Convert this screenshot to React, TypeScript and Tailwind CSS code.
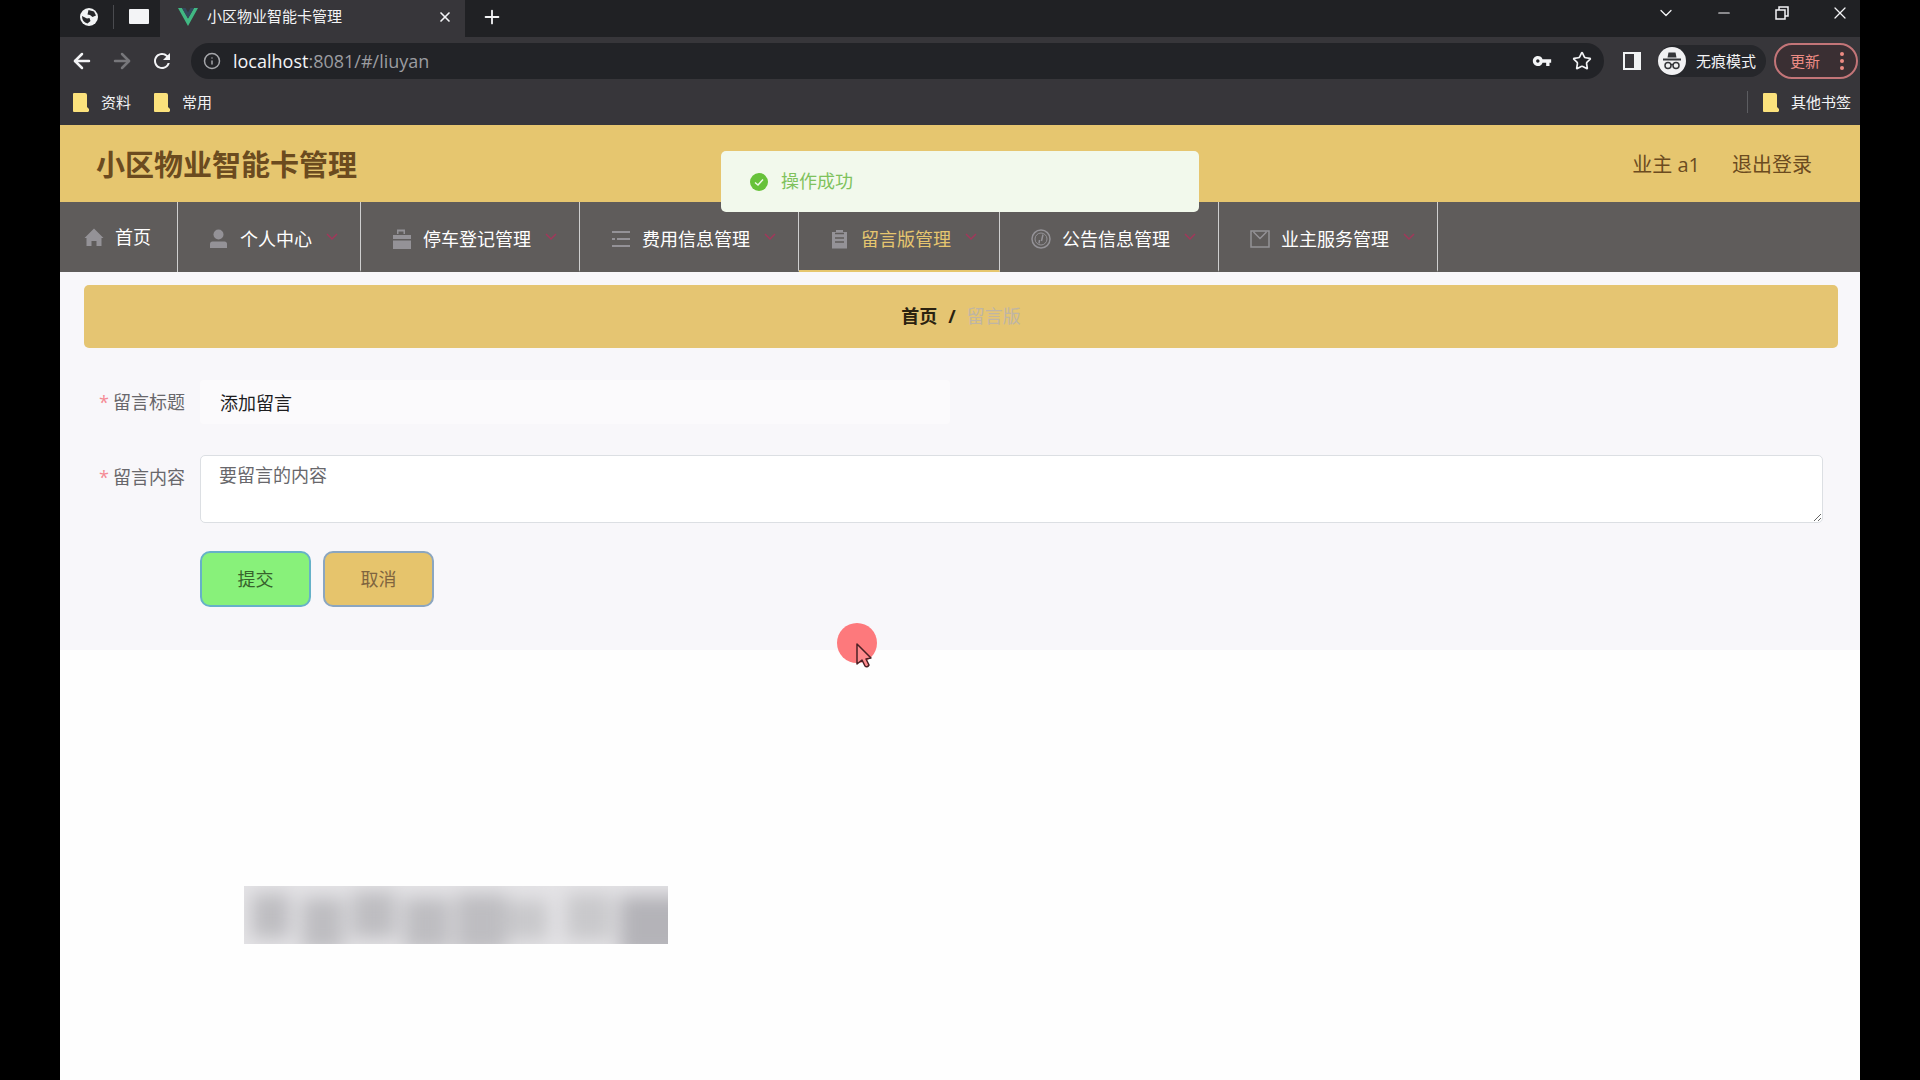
import { useState } from 'react';
import type { ReactNode } from 'react';
import { ArrowLeft, ArrowRight, ChevronDown, Info, Minus, Plus, Star, X } from 'lucide-react';
import { MdRefresh, MdVpnKey } from 'react-icons/md';

function HomeIcon() {
  return (
    <svg viewBox="0 0 20 20" className="h-5 w-5" fill="currentColor">
      <path d="M10 1.500 L19.500 11 H17.500 V19 H12.500 V14 H7.500 V19 H2.500 V11 H0.500 Z" />
    </svg>
  );
}

function UserIcon() {
  return (
    <svg viewBox="0 0 20 20" className="h-5 w-5" fill="currentColor">
      <ellipse cx="9.5" cy="5.5" rx="5" ry="5" />
      <path d="M1 19 V15 Q1 12.500 3.500 12.500 H15.500 Q18 12.500 18 15 V19 Z" />
    </svg>
  );
}

function BagIcon() {
  return (
    <svg viewBox="0 0 20 20" className="h-5 w-5" fill="currentColor">
      <path d="M5 5 V0.500 H13 V5 H11.500 V2.500 H6.500 V5 Z" />
      <path d="M1 6 H19 V10 H1 Z M1 11.500 H19 V20 H1 Z" />
    </svg>
  );
}

function ListIcon() {
  return (
    <svg viewBox="0 0 20 20" className="h-5 w-5" stroke="currentColor" strokeWidth="2" fill="none">
      <path d="M1 3 H19 M6 10 H19 M1 17 H19 M1 10 H4" />
    </svg>
  );
}

function ClipboardIcon() {
  return (
    <svg viewBox="0 0 20 20" className="h-5 w-5">
      <path d="M2 3 H6 V1 H13 V3 H17 V19.500 H2 Z" fill="currentColor" />
      <path d="M5 4.500 H14 M5 9 H14 M5 13 H14" stroke="#5f5c5b" strokeWidth="1.500" />
    </svg>
  );
}

function CompassIcon() {
  return (
    <svg viewBox="0 0 20 20" className="h-5 w-5" stroke="currentColor" fill="none">
      <circle cx="10" cy="10" r="9" strokeWidth="1.500" />
      <circle cx="10" cy="10" r="6" strokeWidth="1" />
      <path d="M12 5.500 L10.500 12 M8.500 11 L8 14.500" strokeWidth="1.500" />
    </svg>
  );
}

function MessageIcon() {
  return (
    <svg viewBox="0 0 20 20" className="h-5 w-5" stroke="currentColor" strokeWidth="1.500" fill="none">
      <path d="M1 2 H19 V18 H1 Z M3.500 3 L10 9.500 L16.500 3" />
    </svg>
  );
}

function IncognitoIcon() {
  return (
    <svg viewBox="0 0 28 28" className="h-7 w-7">
      <circle cx="14" cy="14" r="14" fill="#f1f1f3" />
      <path d="M9.500 10.500 L10.500 5.500 H17.500 L18.500 10.500 Z" fill="#35363a" />
      <path d="M5 12.500 H23" stroke="#35363a" strokeWidth="2" />
      <g fill="none" stroke="#35363a" strokeWidth="1.500">
        <circle cx="10" cy="18.500" r="3" />
        <circle cx="18" cy="18.500" r="3" />
        <path d="M13 18 Q14 17 15 18" />
      </g>
    </svg>
  );
}

function GlobeIcon() {
  return (
    <svg viewBox="0 0 18 18" className="h-[18px] w-[18px]">
      <circle cx="9" cy="9" r="9" fill="#f1f3f4" />
      <path d="M2 8 L7 10.500 L9.500 10 L10.500 13 L7.500 15.500 Q2 14 2 8 Z M8.500 2 L14 3.500 L16 7.500 L12.500 9 L10 7 L7.500 6.500 Z" fill="#26272a" />
    </svg>
  );
}

function VueLogo() {
  return (
    <svg viewBox="0 0 20 18" className="h-[18px] w-5">
      <path d="M0 0 H4 L10 10.500 L16 0 H20 L10 18 Z" fill="#41b883" />
      <path d="M4 0 H7.500 L10 4.500 L12.500 0 H16 L10 10.500 Z" fill="#35495e" />
    </svg>
  );
}

function RestoreIcon() {
  return (
    <svg viewBox="0 0 14 14" className="h-[14px] w-[14px]" stroke="currentColor" strokeWidth="1.500" fill="none">
      <path d="M1 4 H10 V13 H1 Z M4 4 V1 H13 V10 H10" />
    </svg>
  );
}

function Bookmark({ label }: { label: string }) {
  return (
    <a href="#" className="flex items-center gap-3">
      <svg viewBox="0 0 16 19" className="h-[19px] w-4">
        <path d="M0 1 Q0 0 1 0 H12 Q14 0 14 2 V14 L16 16 V18 L15 19 H1 Q0 19 0 18 Z" fill="#fbe27c" />
      </svg>
      {label}
    </a>
  );
}

function Browser() {
  return (
    <div className="h-[125px] bg-[#37363a] text-[15px] text-gray-100">
      <div className="flex h-[37px] justify-between bg-[#202124]">
        <div className="flex">
          <div className="flex w-[100px] items-center gap-[15px] pb-1 pl-5">
            <GlobeIcon />
            <span className="h-6 w-px bg-[#4a4b4f]" />
            <span className="h-[15px] w-5 rounded-[1px] bg-gray-100" />
          </div>
          <div className="flex w-[305px] items-center bg-[#37363a] pr-3 pb-1 pl-[18px]">
            <VueLogo />
            <span className="ml-[9px] flex-1">小区物业智能卡管理</span>
            <button aria-label="关闭标签页">
              <X className="h-4 w-4" strokeWidth={2.5} />
            </button>
          </div>
          <button aria-label="新标签页" className="pb-1 pl-4">
            <Plus className="h-[22px] w-[22px]" strokeWidth={2} />
          </button>
        </div>
        <div className="flex h-[26px] items-center gap-[38px] pr-[10px]">
          <button aria-label="搜索标签页" className="flex w-5 justify-center">
            <ChevronDown className="h-5 w-5" strokeWidth={1.5} />
          </button>
          <button aria-label="最小化" className="flex w-5 justify-center">
            <Minus className="h-[18px] w-[18px]" strokeWidth={1.5} />
          </button>
          <button aria-label="还原" className="flex w-5 justify-center">
            <RestoreIcon />
          </button>
          <button aria-label="关闭" className="flex w-5 justify-center">
            <X className="h-5 w-5" strokeWidth={1.5} />
          </button>
        </div>
      </div>

      <div className="flex h-12 items-center pr-[2px] pl-[10px]">
        <button aria-label="后退">
          <ArrowLeft className="h-6 w-6" strokeWidth={2.5} />
        </button>
        <button aria-label="前进" className="ml-4 text-[#77777b]">
          <ArrowRight className="h-6 w-6" strokeWidth={2.5} />
        </button>
        <button aria-label="重新加载" className="ml-4">
          <MdRefresh className="h-6 w-6" />
        </button>
        <div className="ml-[17px] flex h-9 flex-1 items-center rounded-full bg-[#222327] pr-3 pl-3">
          <Info className="h-[18px] w-[18px] text-[#a5a6aa]" />
          <span className="ml-3 flex-1 text-[18px] text-[#9b9ca0]">
            <span className="text-gray-100">localhost</span>:8081/#/liuyan
          </span>
          <MdVpnKey className="h-5 w-5" />
          <Star className="ml-5 h-5 w-5" />
        </div>
        <svg viewBox="0 0 18 18" className="ml-[19px] h-[18px] w-[18px]">
          <path d="M1 1 H17 V17 H1 Z" fill="none" stroke="#f1f3f4" strokeWidth="2" />
          <path d="M11 1 H17 V17 H11 Z" fill="#f1f3f4" />
        </svg>
        <div className="ml-[17px] flex h-8 w-[108px] items-center gap-[10px] rounded-full bg-[#26272b]">
          <IncognitoIcon />
          无痕模式
        </div>
        <button className="ml-2 flex h-9 w-[84px] items-center gap-5 rounded-full border-2 border-[#c37578] bg-[#3a2f33] pl-[14px] text-[#ec8b84]">
          更新
          <svg viewBox="0 0 4 18" className="h-[18px] w-1" fill="currentColor">
            <circle cx="2" cy="2" r="2" />
            <circle cx="2" cy="9" r="2" />
            <circle cx="2" cy="16" r="2" />
          </svg>
        </button>
      </div>

      <div className="flex h-[34px] items-center gap-[23px] pr-[9px] pl-[13px]">
        <Bookmark label="资料" />
        <Bookmark label="常用" />
        <div className="ml-auto flex items-center gap-[15px]">
          <span className="h-[22px] w-px bg-[#5c5d61]" />
          <Bookmark label="其他书签" />
        </div>
      </div>
    </div>
  );
}

const menus = [
  { title: '个人中心', icon: UserIcon },
  { title: '停车登记管理', icon: BagIcon },
  { title: '费用信息管理', icon: ListIcon },
  { title: '留言版管理', icon: ClipboardIcon, active: true },
  { title: '公告信息管理', icon: CompassIcon },
  { title: '业主服务管理', icon: MessageIcon },
];

function NavBar() {
  return (
    <nav className="flex h-[70px] bg-[#5f5c5b] text-[18px] text-white">
      <a href="#/" className="flex items-center gap-[11px] border-r border-[#cfcfcf] pr-[26px] pl-6">
        <span className="text-[#949297]">
          <HomeIcon />
        </span>
        首页
      </a>
      {menus.map((menu) => (
        <button
          key={menu.title}
          className={`flex items-center border-r border-b-2 border-r-[#cfcfcf] pt-[6px] pr-5 pl-[31px] ${
            menu.active ? 'border-b-[#e6c66f] text-[#e6c66f]' : 'border-b-[#5f5c5b]'
          }`}
        >
          <span className="mr-[11px] text-[#949297]">
            <menu.icon />
          </span>
          {menu.title}
          <svg viewBox="0 0 16 16" className="mb-1 ml-3 h-4 w-4" fill="none" stroke="#a0385a" strokeWidth="1.500">
            <path d="M3 5 L8 10 L13 5" />
          </svg>
        </button>
      ))}
    </nav>
  );
}

function FormRow({ label, id, children }: { label: string; id: string; children: ReactNode }) {
  return (
    <div className="flex min-h-[47px] items-start">
      <label htmlFor={id} className="flex h-[45px] w-[140px] items-center justify-end gap-1 pr-[15px] text-[#68676b]">
        <span className="text-[#f58a94]">*</span>
        {label}
      </label>
      {children}
    </div>
  );
}

function MessageForm() {
  const [title, setTitle] = useState('添加留言');
  const [content, setContent] = useState('要留言的内容');

  return (
    <form className="flex flex-col gap-7 pt-8 pr-[37px] pb-[43px] text-[18px]" onSubmit={(e) => e.preventDefault()}>
      <FormRow label="留言标题" id="title">
        <input
          id="title"
          value={title}
          onChange={(e) => setTitle(e.target.value)}
          className="h-11 w-[750px] rounded bg-[#fbfafc] px-5 text-[#1d1d1f] outline-none"
        />
      </FormRow>
      <FormRow label="留言内容" id="content">
        <textarea
          id="content"
          value={content}
          onChange={(e) => setContent(e.target.value)}
          className="h-[68px] flex-1 rounded-[5px] border border-[#dcdfe3] bg-white px-[18px] py-[5px] text-[18px] leading-7 text-[#68676b] outline-none"
        />
      </FormRow>
      <div className="flex gap-3 pl-[140px]">
        <button type="submit" className="h-14 w-[111px] rounded-[10px] border-2 border-[#66b1c8] bg-[#88f17a] text-[#37622c]">
          提交
        </button>
        <button type="button" className="h-14 w-[111px] rounded-[10px] border-2 border-[#8ba6c0] bg-[#e6c46c] text-[#80653f]">
          取消
        </button>
      </div>
    </form>
  );
}

function Toast() {
  return (
    <div role="alert" className="absolute top-[151px] left-1/2 flex h-[61px] w-[478px] -translate-x-1/2 items-center gap-3 rounded-[5px] bg-[#f2f9ec] pl-7 text-[18px] text-[#7fc25c]">
      <svg viewBox="0 0 20 20" className="h-5 w-5">
        <circle cx="10" cy="10" r="9" fill="#67c23a" />
        <path d="M6 10.500 L9 13 L14 7.500" fill="none" stroke="#f0f9eb" strokeWidth="1.500" />
      </svg>
      操作成功
    </div>
  );
}

function MaskedStrip() {
  return (
    <svg viewBox="0 0 424 58" className="absolute top-[886px] left-[184px] h-[58px] w-[424px]">
      <defs>
        <filter id="soft" x="-20%" y="-20%" width="140%" height="140%">
          <feGaussianBlur stdDeviation="9" />
        </filter>
      </defs>
      <rect width="424" height="58" fill="#e4e3e6" />
      <g filter="url(#soft)" fill="#bebdc1">
        <rect x="8" y="8" width="38" height="44" />
        <rect x="58" y="12" width="42" height="52" />
        <rect x="108" y="6" width="44" height="46" />
        <rect x="160" y="12" width="46" height="52" />
        <rect x="212" y="8" width="50" height="58" />
        <rect x="262" y="14" width="42" height="40" opacity="0.7" />
        <rect x="322" y="8" width="46" height="46" opacity="0.7" />
        <rect x="376" y="10" width="70" height="60" fill="#b4b3b8" />
      </g>
    </svg>
  );
}

function Pointer() {
  return (
    <svg viewBox="0 0 42 48" className="absolute top-[622px] left-[776px] h-12 w-[42px]">
      <circle cx="21" cy="21" r="20" fill="#fd797c" />
      <path
        d="M21 22 L21 42 L26 38 L29 44 Q31 46 33 43 L30 37 L35 36 Z"
        fill="#fd8a8d"
        stroke="#4a2024"
        strokeWidth="1.500"
        strokeLinejoin="round"
      />
    </svg>
  );
}

export default function App() {
  return (
    <div className="min-h-screen bg-black px-[60px] font-['Open_Sans','Noto_Sans_CJK_SC',sans-serif]">
      <div className="relative min-h-screen bg-[#fefefe]">
        <Browser />
        <header className="flex h-[77px] items-center justify-between bg-[#e6c66f] pt-[2px] pr-12 pl-9 text-[#6b4b1f]">
          <h1 className="text-[29px] font-bold">小区物业智能卡管理</h1>
          <div className="flex gap-8 text-xl">
            <span>业主 a1</span>
            <a href="#/login">退出登录</a>
          </div>
        </header>
        <NavBar />
        <main className="bg-[#f8f7fa] pt-[13px]">
          <div className="mr-[22px] ml-6 flex h-[63px] items-center justify-center gap-[11px] rounded-[5px] bg-[#e5c572] text-[18px]">
            <a href="#/" className="font-bold text-[#2b2210]">
              首页
            </a>
            <span className="font-bold text-[#2b2210]">/</span>
            <span className="text-[#bfb5a4]">留言版</span>
          </div>
          <MessageForm />
        </main>
        <Toast />
        <MaskedStrip />
        <Pointer />
      </div>
    </div>
  );
}
